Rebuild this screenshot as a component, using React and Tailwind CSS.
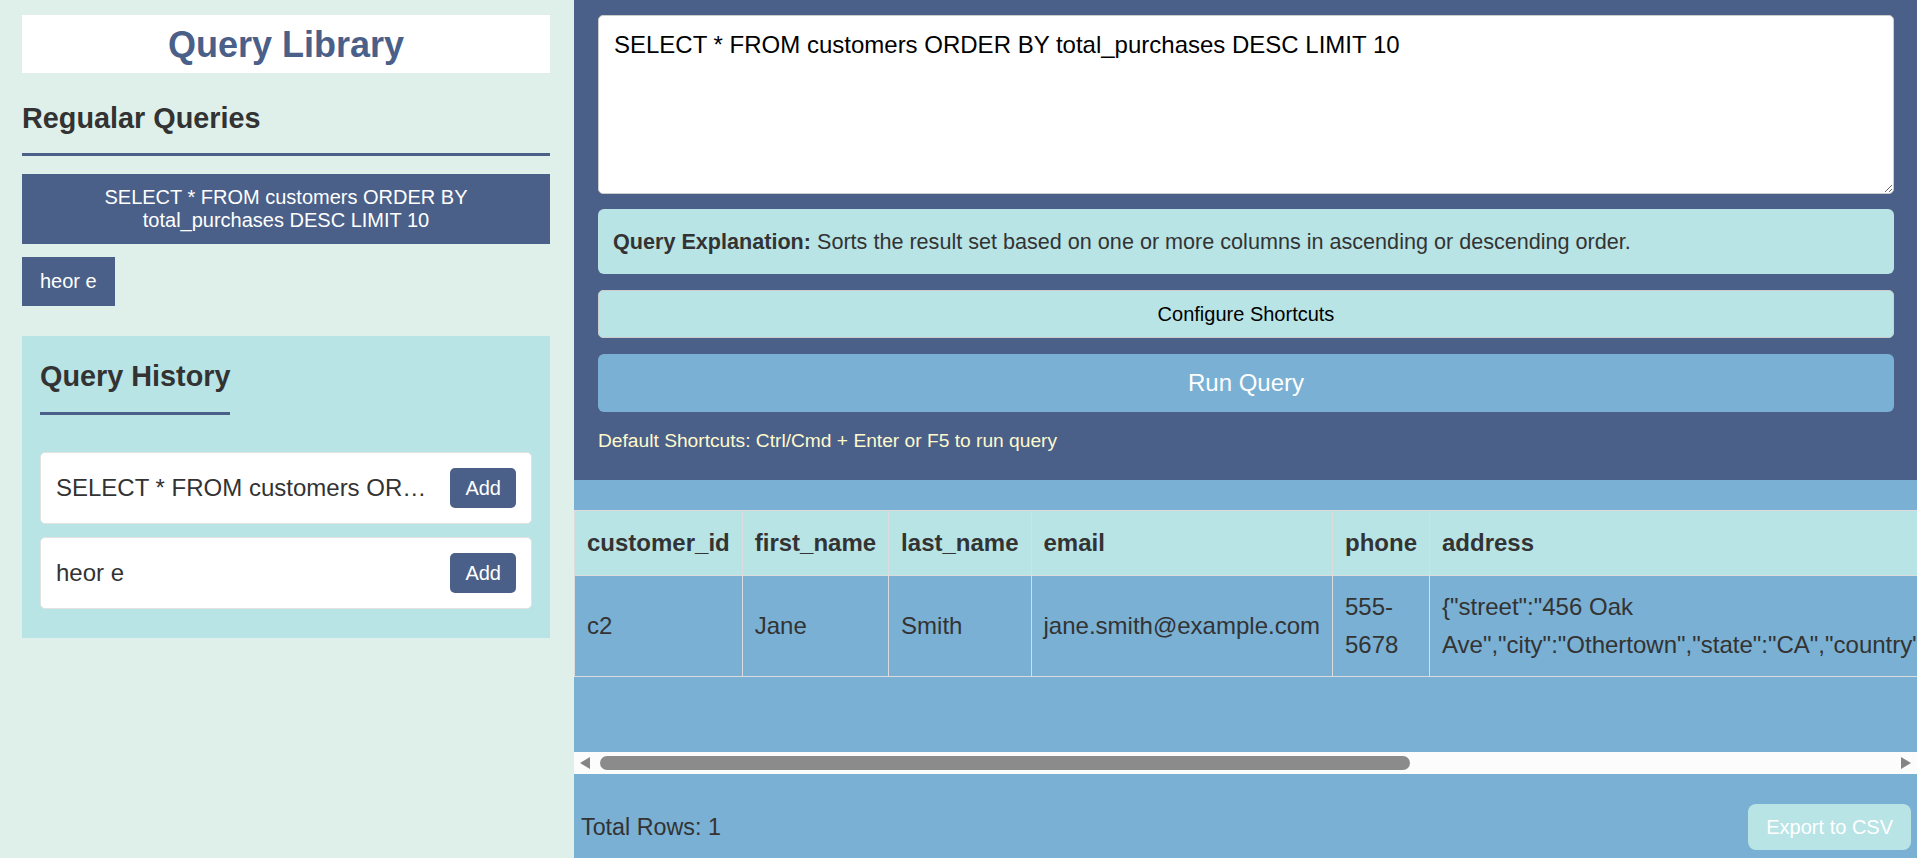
import { useState } from 'react'

const savedQueries = ['SELECT * FROM customers ORDER BY total_purchases DESC LIMIT 10', 'heor e']

const historyItems = ['SELECT * FROM customers ORDER BY total_purchases DESC LIMIT 10', 'heor e']

const columns = ['customer_id', 'first_name', 'last_name', 'email', 'phone', 'address', 'total_purchases']

const rows = [
  {
    customer_id: 'c2',
    first_name: 'Jane',
    last_name: 'Smith',
    email: 'jane.smith@example.com',
    phone: '555-5678',
    address: '{"street":"456 Oak Ave","city":"Othertown","state":"CA","country":"USA"}',
    total_purchases: '1850.75',
  },
]

function Sidebar({ onPick }) {
  return (
    <aside className="w-[574px] shrink-0 bg-[#dff0eb] pl-[22px] pr-[24px] pt-[15px]">
      <div className="flex h-[58px] items-center justify-center bg-white">
        <h1 className="text-[36px] font-bold leading-[41px] text-[#4a6089]">Query Library</h1>
      </div>

      <h2 className="mt-[29px] border-b-[3px] border-[#4a6089] pb-[18px] text-[28.8px] font-bold leading-[33px] text-[#333]">
        Regualar Queries
      </h2>

      <div className="mt-[18px] flex flex-col items-start gap-[13px]">
        {savedQueries.map((q, i) => (
          <button
            key={q}
            type="button"
            onClick={() => onPick(q)}
            className={
              i === 0
                ? 'w-full bg-[#4a6089] px-[18px] py-3 text-center text-[20px] leading-[23px] text-white'
                : 'bg-[#4a6089] px-[18px] py-[13px] text-[20px] leading-[23px] text-white'
            }
          >
            {q}
          </button>
        ))}
      </div>

      <section className="mt-[30px] bg-[#b8e4e6] px-[18px] pt-[24px] pb-[29px]">
        <h2 className="inline-block border-b-[3px] border-[#4a6089] pb-[19px] text-[28.8px] font-bold leading-[33px] text-[#333]">
          Query History
        </h2>
        <ul className="mt-[37px] flex flex-col gap-[13px]">
          {historyItems.map((q) => (
            <li
              key={q}
              className="flex h-[72px] items-center justify-between rounded-[5px] border border-[#e2e2e2] bg-white px-[15px]"
            >
              <span className="min-w-0 truncate text-[24px] leading-[28px] text-[#333]">{q}</span>
              <button
                type="button"
                onClick={() => onPick(q)}
                className="ml-5 h-[40px] shrink-0 rounded-[5px] bg-[#4a6089] px-[15px] text-[20px] text-white"
              >
                Add
              </button>
            </li>
          ))}
        </ul>
      </section>
    </aside>
  )
}

// headless browser hides native scrollbars, so draw the bar
function ScrollBar() {
  return (
    <div className="flex h-[22px] items-center bg-[#fcfcfc]">
      <span className="flex w-[22px] shrink-0 justify-center">
        <svg width="10" height="12" viewBox="0 0 10 12" aria-hidden="true">
          <polygon points="10,0 10,12 0,6" fill="#858585" />
        </svg>
      </span>
      <div className="flex h-full flex-1 items-center">
        <div className="ml-1 h-[14px] w-[810px] rounded-full bg-[#8b8b8b]" />
      </div>
      <span className="flex w-[22px] shrink-0 justify-center">
        <svg width="10" height="12" viewBox="0 0 10 12" aria-hidden="true">
          <polygon points="0,0 0,12 10,6" fill="#858585" />
        </svg>
      </span>
    </div>
  )
}

function Results() {
  return (
    <div className="flex-1 bg-[#79b0d3] pt-[30px]">
      <div className="h-[242px] overflow-hidden">
        <table className="border-collapse text-left text-[24px] text-[#333]">
          <thead>
            <tr className="bg-[#b8e4e6]">
              {columns.map((c) => (
                <th key={c} className="border border-[#dcdcdc] px-3 py-[13px] font-bold leading-[38px]">
                  {c}
                </th>
              ))}
            </tr>
          </thead>
          <tbody>
            {rows.map((r) => (
              <tr key={r.customer_id}>
                {columns.map((c) => (
                  <td key={c} className="border border-[#dcdcdc] px-3 py-[12px] leading-[38px]">
                    {r[c]}
                  </td>
                ))}
              </tr>
            ))}
          </tbody>
        </table>
      </div>
      <ScrollBar />

      <div className="mt-[30px] flex items-center justify-between pl-[7px] pr-[6px] pb-[8px]">
        <span className="text-[23.3px] text-[#333]">Total Rows: {rows.length}</span>
        <button type="button" className="h-[46px] rounded-[8px] bg-[#b8e4e6] px-[18px] text-[20px] text-white">
          Export to CSV
        </button>
      </div>
    </div>
  )
}

export default function App() {
  const [query, setQuery] = useState(savedQueries[0])

  return (
    <div className="flex min-h-screen font-['Liberation_Sans',Arial,sans-serif]">
      <Sidebar onPick={setQuery} />

      <main className="flex min-w-0 flex-1 flex-col">
        <div className="bg-[#4a6089] pt-[15px] pr-[23px] pb-[28px] pl-6">
          <textarea
            value={query}
            onChange={(e) => setQuery(e.target.value)}
            className="block h-[179px] w-full rounded-[5px] border border-[#ccc] bg-white p-[15px] text-[24px] leading-[normal] text-black outline-none"
          />

          <div className="mt-[15px] rounded-[6px] bg-[#b8e4e6] px-[15px] py-5 text-[21.6px] leading-[25px] text-[#333]">
            <strong>Query Explanation:</strong> Sorts the result set based on one or more columns in ascending or
            descending order.
          </div>

          <button
            type="button"
            className="mt-4 block h-[48px] w-full rounded-[5px] border border-[#ccc] bg-[#b8e4e6] text-[20px] text-black"
          >
            Configure Shortcuts
          </button>

          <button type="button" className="mt-4 block h-[58px] w-full rounded-[6px] bg-[#79b0d3] text-[24px] text-white">
            Run Query
          </button>

          <p className="mt-[18px] text-[19.2px] leading-[22px] text-[#fffacd]">
            Default Shortcuts: Ctrl/Cmd + Enter or F5 to run query
          </p>
        </div>

        <Results />
      </main>
    </div>
  )
}
